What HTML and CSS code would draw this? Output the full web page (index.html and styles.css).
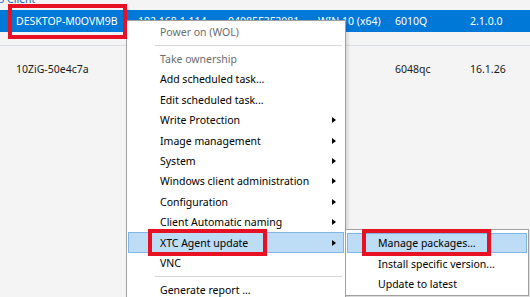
FILE: index.html
```html
<!DOCTYPE html>
<html lang="en">
<head>
    <meta charset="UTF-8">
    <title>Client list - context menu</title>
    <link rel="stylesheet" href="styles.css">
</head>
<body>
    <div class="screen">
        <div class="crumb"><span>o Client</span></div>

        <div class="row selected">
            <span>DESKTOP-M0OVM9B</span>
            <span>192.168.1.114</span>
            <span>04085E3F2081</span>
            <span>WIN 10 (x64)</span>
            <span>6010Q</span>
            <span>2.1.0.0</span>
        </div>
        <div class="row-gap"></div>
        <div class="row tall">
            <span>10ZiG-50e4c7a</span>
            <span></span>
            <span></span>
            <span></span>
            <span>6048qc</span>
            <span>16.1.26</span>
        </div>

        <!-- context menu -->
        <div class="menu main-menu">
            <div class="menu-item disabled">Power on (WOL)</div>
            <div class="menu-sep"></div>
            <div class="menu-item disabled">Take ownership</div>
            <div class="menu-item">Add scheduled task...</div>
            <div class="menu-item">Edit scheduled task...</div>
            <div class="menu-item">Write Protection <i class="arrow"></i></div>
            <div class="menu-item">Image management <i class="arrow"></i></div>
            <div class="menu-item">System <i class="arrow"></i></div>
            <div class="menu-item">Windows client administration <i class="arrow"></i></div>
            <div class="menu-item">Configuration <i class="arrow"></i></div>
            <div class="menu-item">Client Automatic naming <i class="arrow"></i></div>
            <div class="menu-item active">XTC Agent update <i class="arrow"></i></div>
            <div class="menu-item">VNC</div>
            <div class="menu-sep"></div>
            <div class="menu-item">Generate report ...</div>
        </div>

        <div class="menu sub-menu">
            <div class="menu-item active">Manage packages...</div>
            <div class="menu-item">Install specific version...</div>
            <div class="menu-item">Update to latest</div>
        </div>

        <!-- red highlight marks -->
        <div class="mark mark-host"></div>
        <div class="mark mark-xtc"></div>
        <div class="mark mark-manage"></div>
    </div>
</body>
</html>
```

FILE: styles.css
```css
* {
    margin: 0;
    padding: 0;
    box-sizing: border-box;
}

body {
    font-family: "Noto Sans", "Open Sans", sans-serif;
    font-size: 10.5px;
    color: #1a1a1a;
    background: #f4f4f4;
}

.screen {
    position: relative;
    width: 530px;
    height: 297px;
    overflow: hidden;
}

.crumb {
    height: 10px;
    overflow: hidden;
}

.crumb span {
    display: block;
    margin-top: -8px;
    margin-left: -2px;
    line-height: 14px;
    color: #1a65c7;
}

.row {
    display: grid;
    grid-template-columns: 122px 90px 90px 77px 75px 1fr;
    align-items: center;
    height: 22px;
    padding-left: 16px;
    white-space: nowrap;
}

.row.selected {
    background: #0078d7;
    color: #fff;
}

.row.tall {
    height: 45px;
}

.row-gap {
    height: 14px;
    border-bottom: 1px solid #d9dee4;
}

.menu {
    position: absolute;
    background: #fff;
    border: 1px solid #a0a0a0;
    padding: 1px;
    color: #000;
    box-shadow: 2px 2px 3px rgba(0, 0, 0, 0.12);
}

.main-menu {
    left: 126px;
    top: 20px;
    width: 220px;
}

.sub-menu {
    left: 345px;
    top: 229px;
    width: 184px;
    padding-top: 3px;
}

.menu-item {
    display: flex;
    justify-content: space-between;
    align-items: center;
    height: 20.4px;
    border: 1px solid transparent;
    padding-left: 31px;
    white-space: nowrap;
}

.sub-menu .menu-item {
    padding-left: 30px;
}

.menu-item.disabled {
    color: #6d6d6d;
}

.menu-item.active {
    background: #bddcf5;
    border-color: #7fb6e6;
}

.arrow {
    width: 0;
    height: 0;
    margin-right: 7px;
    border-left: 4px solid #000;
    border-top: 3.5px solid transparent;
    border-bottom: 3.5px solid transparent;
}

.menu-sep {
    margin: 3px 2px 2.5px 27px;
    border-top: 1px solid #d7d7d7;
}

.mark {
    position: absolute;
    border: 4px solid #e81123;
}

.mark-host {
    left: 8px;
    top: 4px;
    width: 119px;
    height: 35px;
}

.mark-xtc {
    left: 148px;
    top: 229px;
    width: 119px;
    height: 27px;
}

.mark-manage {
    left: 362px;
    top: 229px;
    width: 129px;
    height: 27px;
}
```
